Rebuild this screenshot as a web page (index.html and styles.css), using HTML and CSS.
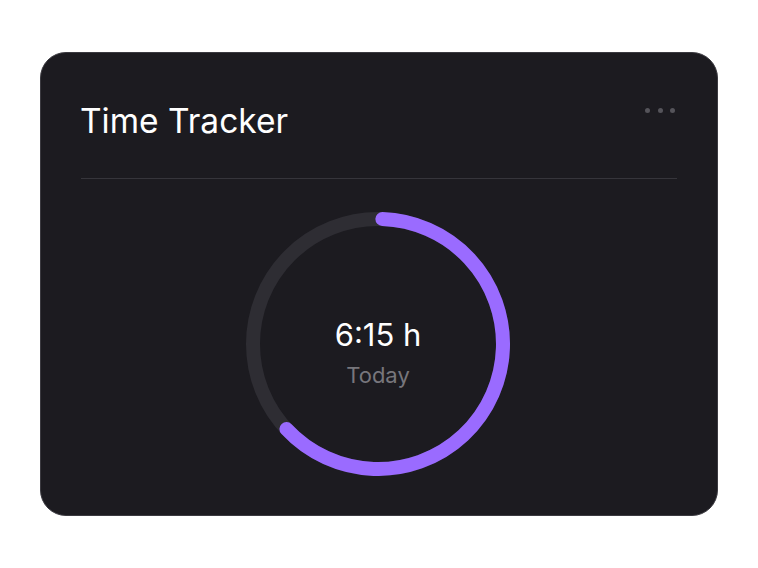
FILE: index.html
```html
<!DOCTYPE html>
<html lang="en">
<head>
    <meta charset="UTF-8">
    <title>Time Tracker</title>
    <link rel="stylesheet" href="styles.css">
</head>
<body>
    <div class="card">
        <div class="card-head">
            <h1 class="title">Time Tracker</h1>
            <div class="more">
                <span></span><span></span><span></span>
            </div>
        </div>
        <div class="card-body">
            <div class="ring">
                <svg width="264" height="264" viewBox="0 0 264 264">
                    <circle class="track" cx="132" cy="132" r="125"></circle>
                    <circle class="bar" cx="132" cy="132" r="125"
                        stroke-dasharray="490.9 785.4"
                        transform="rotate(-88 132 132)"></circle>
                </svg>
                <div class="ring-text">
                    <div class="hours">6:15 h</div>
                    <div class="label">Today</div>
                </div>
            </div>
        </div>
    </div>
</body>
</html>
```

FILE: styles.css
```css
body{
    margin: 0;
    background-color: #ffffff;
    font-family: Inter, "Noto Sans", sans-serif;
}
.card{
    box-sizing: border-box;
    margin: 52px 40px 0;
    width: 678px;
    height: 464px;
    padding: 0 40px;
    background-color: #1c1b20;
    border: 1px solid #3b3a40;
    border-radius: 26px;
}
.card-head{
    display: flex;
    justify-content: space-between;
    align-items: flex-start;
    height: 125px;
    border-bottom: 1px solid #36353b;
}
.title{
    margin: 48px 0 0 -1px;
    font-size: 33.5px;
    font-weight: 400;
    line-height: 40px;
    color: #ffffff;
}
.more{
    display: flex;
    gap: 7.5px;
    margin-top: 55px;
    margin-right: 2px;
}
.more span{
    width: 5px;
    height: 5px;
    border-radius: 50%;
    background-color: #55545a;
}
.card-body{
    display: flex;
    justify-content: center;
    padding-top: 33px;
    padding-right: 2px;
}
.ring{
    position: relative;
    width: 264px;
    height: 264px;
}
.ring svg{
    display: block;
}
.track{
    fill: none;
    stroke: #2e2d33;
    stroke-width: 14;
}
.bar{
    fill: none;
    stroke: #9a6bff;
    stroke-width: 14;
    stroke-linecap: round;
}
.ring-text{
    position: absolute;
    inset: 0;
    display: flex;
    flex-direction: column;
    align-items: center;
    padding-top: 103px;
}
.hours{
    font-size: 31px;
    line-height: 40px;
    color: #ffffff;
}
.label{
    font-size: 22px;
    line-height: 30px;
    margin-top: 5px;
    color: #77767c;
}
```
